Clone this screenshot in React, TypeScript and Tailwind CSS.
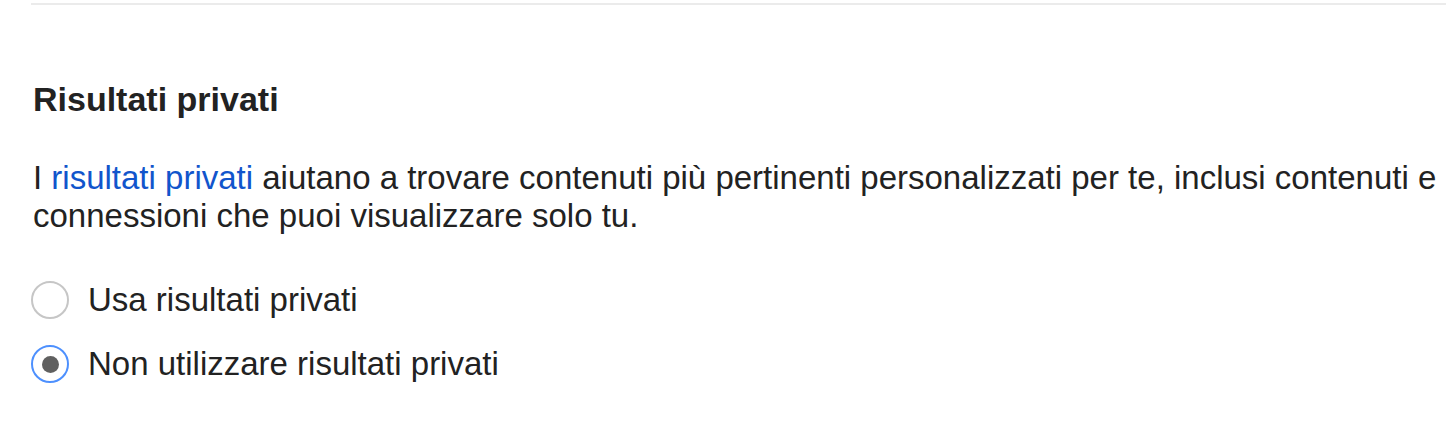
const App = () => (
  <div className="w-[1446px] h-[445px] bg-white overflow-hidden" style={{ fontFamily: '"Liberation Sans", Arial, sans-serif' }}>
    <div className="ml-[31px] h-[2px] mt-[3px] bg-[#ebebeb]"></div>
    <div className="pl-[33px] pt-[74px]">
      <h2 className="text-[34px] leading-[40px] font-bold text-[#222222]">Risultati privati</h2>
      <p className="mt-[40px] text-[33px] leading-[38px] text-[#222222] whitespace-nowrap">
        I <a className="text-[#1155cc]">risultati privati</a> aiutano a trovare contenuti più pertinenti personalizzati per te, inclusi contenuti e
        <br />
        connessioni che puoi visualizzare solo tu.
      </p>
      <div className="mt-[45px] flex flex-col gap-[24px]">
        <label className="flex items-center gap-[19px] -ml-[2px] h-[40px]">
          <span className="w-[38px] h-[38px] rounded-full border-2 border-[#c6c6c6] bg-white"></span>
          <span className="text-[33px] leading-[40px] text-[#222222]">Usa risultati privati</span>
        </label>
        <label className="flex items-center gap-[19px] -ml-[2px] h-[40px]">
          <span className="w-[38px] h-[38px] rounded-full border-2 border-[#4d90fe] bg-white flex items-center justify-center">
            <span className="w-[17px] h-[17px] rounded-full bg-[#606060]"></span>
          </span>
          <span className="text-[33px] leading-[40px] text-[#222222]">Non utilizzare risultati privati</span>
        </label>
      </div>
    </div>
  </div>
);

export default App;
